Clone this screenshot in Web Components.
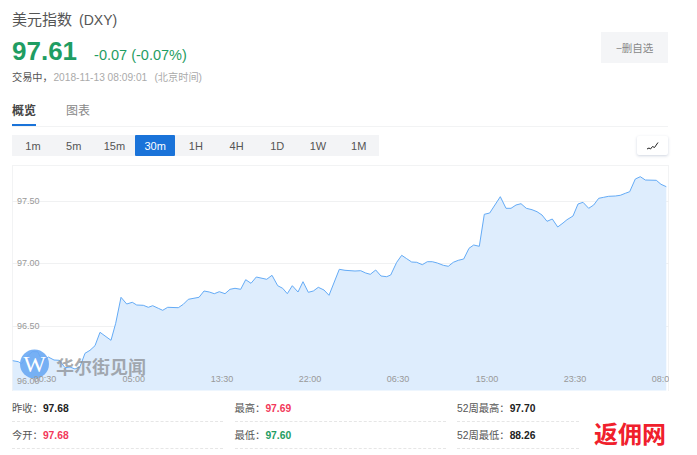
<!DOCTYPE html>
<html lang="zh">
<head>
<meta charset="utf-8">
<title>美元指数 (DXY)</title>
<style>
  html, body { margin: 0; background: #fff; }
  body { font-family: "Liberation Sans", "Noto Sans CJK SC", sans-serif; color: #333; width: 697px; height: 455px; overflow: hidden; position: relative; }
</style>
</head>
<body>
<quote-header></quote-header>
<tab-bar></tab-bar>
<range-bar></range-bar>
<line-chart></line-chart>
<stat-grid>
  <stat-item label="昨收：" value="97.68"></stat-item>
  <stat-item label="最高：" value="97.69" tone="up"></stat-item>
  <stat-item label="52周最高：" value="97.70"></stat-item>
  <stat-item label="今开：" value="97.68" tone="up"></stat-item>
  <stat-item label="最低：" value="97.60" tone="down"></stat-item>
  <stat-item label="52周最低：" value="88.26"></stat-item>
</stat-grid>
<promo-mark>返佣网</promo-mark>

<script>
class QuoteHeader extends HTMLElement {
  constructor() {
    super();
    this.attachShadow({mode: "open"}).innerHTML = `
    <style>
      :host { display: flex; justify-content: space-between; align-items: flex-start; height: 87px; padding: 10px 29px 0 12px; box-sizing: border-box; }
      .title { font-size: 15px; line-height: 20px; color: #555; }
      .title span { font-size: 14px; margin-left: 7px; }
      .price { display: flex; align-items: baseline; gap: 17px; height: 30px; margin-top: 6px; line-height: 30px; color: #1f9d63; }
      .price b { font-size: 26px; }
      .price span { font-size: 14.5px; }
      .meta { font-size: 10.2px; line-height: 20px; margin-top: 1.5px; color: #aaa; white-space: pre; }
      .meta i { font-style: normal; color: #555; margin-right: .7px; }
      .meta span { margin-left: 1.5px; }
      button { width: 67px; height: 31px; margin-top: 22px; border: 0; padding: 0; background: #f4f5f7; color: #888; font: 10.5px "Liberation Sans", "Noto Sans CJK SC", sans-serif; }
    </style>
    <div>
      <div class="title">美元指数<span>(DXY)</span></div>
      <div class="price"><b>97.61</b><span>-0.07 (-0.07%)</span></div>
      <div class="meta"><i>交易中，</i>2018-11-13 08:09:01  <span>(北京时间)</span></div>
    </div>
    <button>−删自选</button>`;
  }
}

class TabBar extends HTMLElement {
  constructor() {
    super();
    this.attachShadow({mode: "open"}).innerHTML = `
    <style>
      :host { display: flex; gap: 30px; height: 40px; margin: 0 29px 0 12px; padding-top: 12px; box-sizing: border-box; border-bottom: 1px solid #f2f3f4; }
      div { height: 25px; font-size: 12px; line-height: 25px; color: #888; }
      .on { color: #444; font-weight: bold; border-bottom: 2px solid #1a73d9; }
    </style>
    <div class="on">概览</div><div>图表</div>`;
  }
}

class RangeBar extends HTMLElement {
  constructor() {
    super();
    const items = ["1m", "5m", "15m", "30m", "1H", "4H", "1D", "1W", "1M"];
    this.attachShadow({mode: "open"}).innerHTML = `
    <style>
      :host { display: flex; justify-content: space-between; align-items: flex-start; height: 38px; padding: 8px 29px 0 12px; box-sizing: border-box; }
      .group { display: flex; box-sizing: border-box; width: 367px; padding-left: .6px; background: #f3f4f6; height: 21px; }
      .group span { width: 40.8px; text-align: center; font-size: 11px; line-height: 22px; color: #555; }
      .group .on { background: #1a73d9; color: #fff; border-radius: 1px; }
      .toggle { display: flex; align-items: center; justify-content: center; width: 31px; height: 19px; margin-top: 1px; background: #fff; border-radius: 2px; box-shadow: 0 1px 3px rgba(40, 70, 120, .22); }
    </style>
    <div class="group">${items.map(t => `<span class="${t == "30m" ? "on" : ""}">${t}</span>`).join("")}</div>
    <div class="toggle">
      <svg width="13" height="10" viewBox="0 0 13 10" fill="none" stroke="#222" stroke-width="1">
        <path d="M1 8 L3 7 L4.5 8 L6.5 5.5 L8.5 6.5 L12 1.5"/>
      </svg>
    </div>`;
  }
}

// traced from the picture, [x, y] in page pixels
const LINE = [[12.7,360.7],[18.3,361.7],[21.7,363.7],[26.7,356.7],[32.3,351.7],[37.7,351.7],[42.7,361.7],[48.3,357],[54,360],[59.3,360.3],[65,367.7],[70,367],[75,369],[80,366.7],[85,353.3],[90,350.3],[95,345.7],[100,332.3],[111,340.3],[115.7,323.3],[121,297.3],[126.7,304],[132.3,302.3],[136.7,305],[143.3,305.3],[148.3,307.3],[152.7,305.7],[158.3,308.3],[162.7,310.3],[167.7,307.3],[178.3,307.7],[183.3,304.3],[188.3,299.3],[199,297.3],[204,291],[209.3,292],[214.3,293.7],[219.3,291.7],[225,293.7],[230,289.3],[235,288.3],[240.7,289.3],[245.7,279.7],[251,283.3],[256.3,277],[266.7,279.3],[272,275.3],[277.7,285.7],[282.7,288.3],[287.3,293.7],[292.3,285.7],[298,292],[303,281.7],[308.3,292.3],[313.3,291],[318.3,287.3],[324,290],[329,295.3],[339.3,269.3],[345,270.3],[355,271],[360.7,270.7],[365.7,273],[370.3,274.3],[375.7,270],[381,276],[386.7,276.7],[390.7,275],[396.7,262.3],[401.7,255.3],[406.7,258.7],[411.7,262],[416.7,262.3],[422.3,264.7],[427.3,261.7],[432.3,261.7],[437.3,263],[443.3,265.3],[448.3,266.3],[453.3,262.3],[458.3,260.3],[463.7,259],[469,248.3],[473.7,245],[479.3,246.3],[484.3,214.3],[489.7,213],[500.3,196.7],[506,208.3],[511,208.3],[516,205],[521,203.7],[526.3,208.3],[532,209.7],[537,211.7],[542,215],[547,221.3],[552.3,219],[557.7,227],[563,223],[567,219.7],[573,216],[578,204],[583,202.3],[588.7,208.3],[593.7,205],[598.7,198.3],[603.7,197.3],[608.7,196.3],[615.3,196],[620.3,195.3],[625.3,193.3],[629.7,191.7],[635.3,179],[640.3,176.7],[645.3,180],[656.3,180.3],[661,184.3],[666.3,186.7]];

class LineChart extends HTMLElement {
  constructor() {
    super();
    const d = LINE.map(p => p.join(",")).join(" ");
    const yLabels = [[201, "97.50"], [263.3, "97.00"], [325.7, "96.50"], [380.7, "96.00"]];
    const xLabels = [[45, "00:30"], [133.7, "05:00"], [222, "13:30"], [310, "22:00"], [398, "06:30"], [487, "15:00"], [575, "23:30"], [663, "08:00"]];
    this.attachShadow({mode: "open"}).innerHTML = `
    <style>
      :host { display: block; height: 226px; margin-left: 12px; width: 657px; }
      svg { display: block; overflow: hidden; font-family: "Liberation Sans", sans-serif; }
      text { font-size: 9px; fill: #999; dominant-baseline: central; }
      .mark { font: bold 18px "Noto Sans CJK SC", sans-serif; fill: #8c8f94; fill-opacity: .75; }
      .w { font: 24px "Liberation Serif", serif; fill: #fff; text-anchor: middle; }
    </style>
    <svg width="657" height="226" viewBox="12 165 657 226">
      <path d="M12 165.5H669M12.5 165V391M668.5 165V391" stroke="#f2f3f4" fill="none"/>
      <path d="M12 201.5H669M12 263.5H669M12 326.5H669" stroke="#f0f1f2" fill="none"/>
      <polygon points="12.7,390.5 ${d} 666.3,390.5" fill="#deedfd"/>
      <polyline points="${d}" fill="none" stroke="#64abf6" stroke-width="1"/>
      <circle cx="34.5" cy="364" r="14.5" fill="#6aa8f3" fill-opacity=".9"/>
      <text class="w" x="34.5" y="364">W</text>
      <text class="mark" x="56" y="366">华尔街见闻</text>
      ${yLabels.map(l => `<text x="17" y="${l[0]}">${l[1]}</text>`).join("")}
      ${xLabels.map(l => `<text x="${l[0]}" y="379.3" text-anchor="middle">${l[1]}</text>`).join("")}
    </svg>`;
  }
}

class StatGrid extends HTMLElement {
  constructor() {
    super();
    this.attachShadow({mode: "open"}).innerHTML = `
    <style>
      :host { display: grid; grid-template-columns: 211px 211px 122px; column-gap: 11.5px; width: 600px; margin: 4px 0 0 12px; }
    </style>
    <slot></slot>`;
  }
}

class StatItem extends HTMLElement {
  constructor() {
    super();
    const tones = {up: "#f2385a", down: "#1f9d63"};
    const color = tones[this.getAttribute("tone")] || "#222";
    this.attachShadow({mode: "open"}).innerHTML = `
    <style>
      :host { display: block; height: 27px; box-sizing: border-box; border-bottom: 1px dashed #e6e6e6; font-size: 10.3px; line-height: 27px; color: #555; white-space: nowrap; }
      b { color: ${color}; }
    </style>
    ${this.getAttribute("label")}<b>${this.getAttribute("value")}</b>`;
  }
}

class PromoMark extends HTMLElement {
  constructor() {
    super();
    this.attachShadow({mode: "open"}).innerHTML = `
    <style>
      :host { position: absolute; left: 594px; top: 419px; font: bold 24px/28px "Noto Sans CJK SC", sans-serif; color: #f0202c; white-space: nowrap; }
    </style>
    <slot></slot>`;
  }
}

customElements.define("quote-header", QuoteHeader);
customElements.define("tab-bar", TabBar);
customElements.define("range-bar", RangeBar);
customElements.define("line-chart", LineChart);
customElements.define("stat-grid", StatGrid);
customElements.define("stat-item", StatItem);
customElements.define("promo-mark", PromoMark);
</script>
</body>
</html>
